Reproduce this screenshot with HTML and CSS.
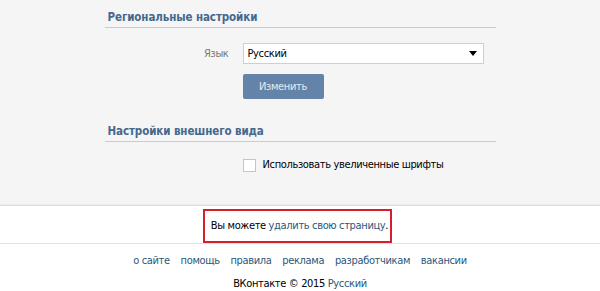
FILE: index.html
```html
<!DOCTYPE html>
<html lang="ru">

<head>
    <meta charset="UTF-8">
    <title>Настройки</title>
    <link rel="stylesheet" href="styles.css">
</head>

<body>

    <!-- Settings area -->
    <div class="settings">
        <div class="settings-inner">
            <div class="section">
                <h2 class="section-title">Региональные настройки</h2>
                <div class="row">
                    <div class="row-label">Язык</div>
                    <div class="select">
                        <span>Русский</span>
                        <svg class="select-arrow" width="8" height="5" viewBox="0 0 8 5">
                            <path d="M0 0h8L4 5z" fill="#000"/>
                        </svg>
                    </div>
                </div>
                <div class="row row-button">
                    <div class="row-label"></div>
                    <button class="button" type="button">Изменить</button>
                </div>
            </div>

            <div class="section section-second">
                <h2 class="section-title">Настройки внешнего вида</h2>
                <div class="row row-check">
                    <div class="row-label"></div>
                    <label class="checkbox">
                        <span class="checkbox-box"></span>
                        Использовать увеличенные шрифты
                    </label>
                </div>
            </div>
        </div>
    </div>

    <!-- Delete page notice -->
    <div class="delete-block">
        <div class="delete-note">Вы можете <a href="#">удалить свою страницу</a>.</div>
    </div>

    <!-- Footer -->
    <div class="footer">
        <div class="footer-links">
            <a href="#">о сайте</a>
            <a href="#">помощь</a>
            <a href="#">правила</a>
            <a href="#">реклама</a>
            <a href="#">разработчикам</a>
            <a href="#">вакансии</a>
        </div>
        <div class="copyright">ВКонтакте © 2015 <a href="#">Русский</a></div>
    </div>

</body>

</html>
```

FILE: styles.css
```css
body {
    margin: 0;
    font-family: "DejaVu Sans Condensed", "DejaVu Sans", sans-serif;
    font-size: 11px;
    letter-spacing: -0.35px;
    color: #000;
    background-color: #fff;
}

a {
    color: #2b587a;
    text-decoration: none;
}

.settings {
    background-color: #f5f5f5;
    border-bottom: 1px solid #dcdcdc;
    box-shadow: 0 -1px 0 #ebebeb inset;
    padding: 9px 0 32px;
}

.settings-inner {
    width: 391px;
    margin: 0 auto;
}

.section-title {
    margin: 0;
    padding: 0 3px 2px;
    font-size: 11.5px;
    line-height: 16px;
    letter-spacing: -0.1px;
    font-weight: bold;
    color: #45688e;
    border-bottom: 1px solid #c8ccd1;
}

.section-second {
    margin-top: 24px;
}

.row {
    display: flex;
    align-items: center;
    margin-top: 15px;
}

.row-button {
    margin-top: 10px;
}

.row-label {
    width: 124px;
    padding-right: 14px;
    text-align: right;
    color: #777;
}

.select {
    width: 241px;
    height: 21px;
    border: 1px solid #cfcfcf;
    background-color: #fff;
    display: flex;
    align-items: center;
    justify-content: space-between;
    padding: 0 6px 0 4px;
    box-sizing: border-box;
}

.button {
    width: 81px;
    height: 25px;
    border: none;
    border-radius: 2px;
    background-color: #6383a8;
    color: #e4ebf2;
    font-family: inherit;
    font-size: 11px;
    letter-spacing: -0.35px;
    padding: 0;
}

.row-check {
    margin-top: 15px;
    line-height: 16px;
}

.checkbox {
    display: flex;
    align-items: center;
    gap: 7px;
    color: #000;
}

.checkbox-box {
    width: 11px;
    height: 11px;
    border: 1px solid #c5c5c5;
    background-color: #fff;
}

.delete-block {
    padding: 3px 5px 0 0;
    border-bottom: 1px solid #e2e2e2;
    text-align: center;
}

.delete-note {
    display: inline-block;
    border: 2px solid #d5202c;
    padding: 8px 2px 8px 6px;
    line-height: 14px;
}

.footer {
    padding-top: 9px;
    text-align: center;
    line-height: 16px;
}

.footer-links a {
    margin: 0 4px;
}

.copyright {
    margin-top: 7px;
}
```
